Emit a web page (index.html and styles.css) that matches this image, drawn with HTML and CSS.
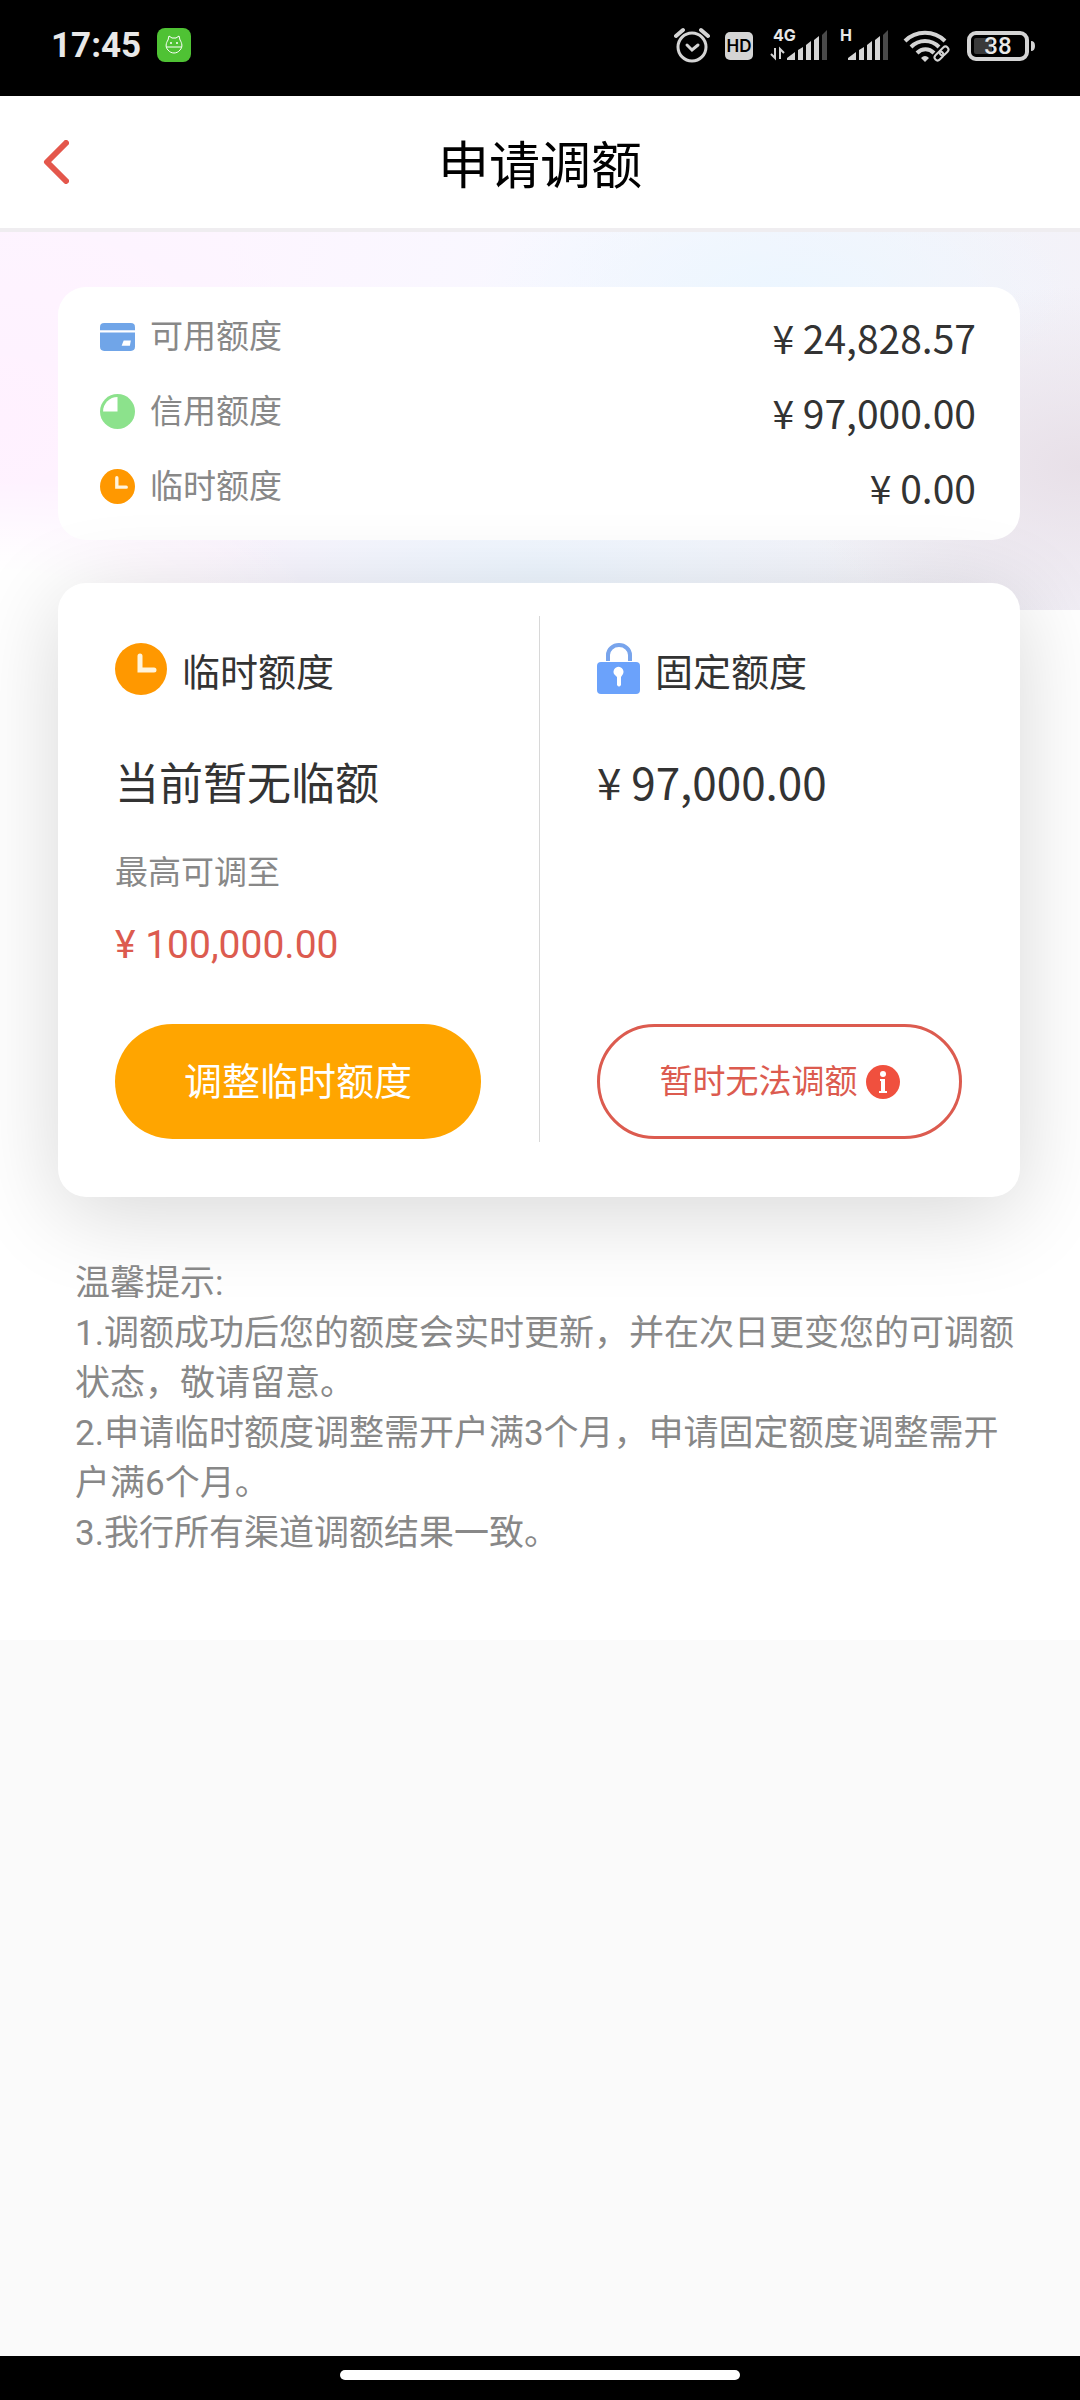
FILE: index.html
```html
<!DOCTYPE html>
<html lang="zh-CN">
<head>
  <meta charset="UTF-8">
  <meta name="viewport" content="width=device-width, initial-scale=1.0">
  <title>申请调额</title>
  <link rel="stylesheet" href="styles.css">
</head>
<body>
  <div class="status-bar">
    <div class="status-left">
      <time class="clock">17:45</time>
      <svg class="app-badge" viewBox="0 0 34 34" aria-hidden="true">
        <rect width="34" height="34" rx="8" fill="#4fc234"/>
        <path d="M11 12l1-4 3 2h4l3-2 1 4c2 3 3 7 0 10-3 4-9 4-12 0-3-3-2-7 0-10zM9 19h16" fill="none" stroke="#fff" stroke-width="1"/>
        <circle cx="14" cy="15" r="1" fill="#fff"/>
        <circle cx="20" cy="15" r="1" fill="#fff"/>
      </svg>
    </div>
    <svg class="status-icons" viewBox="0 0 366 40" aria-label="闹钟 HD 4G 信号 WiFi 电量 38%">
      <!-- alarm -->
      <g fill="none" stroke="#d4d4d4" stroke-width="3" stroke-linecap="round">
        <circle cx="18" cy="22" r="14"/>
        <path d="M13 20l5 5 6-5"/>
        <path d="M2 11l7-6M27 5l7 6" stroke-width="4"/>
      </g>
      <!-- HD -->
      <rect x="51" y="7" width="28" height="28" rx="5" fill="#d4d4d4"/>
      <text x="65" y="27" class="hd-text">HD</text>
      <!-- 4G -->
      <text x="99" y="16" class="net-text">4G</text>
      <path d="M101 23v10l-4-4M106 34V24l4 4" fill="none" stroke="#d4d4d4" stroke-width="2"/>
      <g fill="#d4d4d4">
        <path d="M113 35v-2l8-6v8zM124 35V25l5-3v13zM132 35V20l5-4v19zM140 35V15l5-4v24z"/>
        <path d="M148 35V10l5-5v30z" fill="#4a4a4a"/>
        <path d="M174 35v-2l8-6v8zM185 35V25l5-3v13zM193 35V20l5-4v19zM201 35V15l5-4v24z"/>
        <path d="M209 35V10l5-5v30z" fill="#4a4a4a"/>
      </g>
      <text x="166" y="16" class="net-text">H</text>
      <!-- wifi -->
      <g fill="none" stroke="#d4d4d4" stroke-width="4">
        <path d="M231 16c11-11 29-11 40 0M237 22c8-8 20-8 28 0M243 28c5-5 12-5 17 0"/>
      </g>
      <path d="M247 33q4-4 8 0l-4 4z" fill="#d4d4d4"/>
      <g fill="none" stroke="#000" stroke-width="6">
        <rect x="262" y="27" width="11" height="6" rx="3" transform="rotate(-45 268 30)"/>
      </g>
      <g fill="none" stroke="#d4d4d4" stroke-width="2">
        <rect x="265" y="23" width="10" height="6" rx="3" transform="rotate(-45 270 26)"/>
        <rect x="260" y="28" width="10" height="6" rx="3" transform="rotate(-45 265 31)"/>
      </g>
      <!-- battery -->
      <rect x="295" y="8" width="58" height="26" rx="7" fill="none" stroke="#d4d4d4" stroke-width="4"/>
      <rect x="300" y="13" width="18" height="16" rx="2" fill="#3a3a3a"/>
      <path d="M357 16q4 0 4 5t-4 5z" fill="#d4d4d4"/>
      <text x="324" y="29" class="battery-text">38</text>
    </svg>
  </div>

  <header class="nav-bar">
    <a href="#" class="back" aria-label="返回">
      <svg viewBox="0 0 26 44"><path d="M23 3L4 22l19 19" fill="none" stroke="#e4574c" stroke-width="6" stroke-linecap="round" stroke-linejoin="round"/></svg>
    </a>
    <h1>申请调额</h1>
  </header>

  <main>
    <section class="card summary">
      <dl>
        <div class="row">
          <dt>
            <svg viewBox="0 0 34 34"><rect y="4" width="34" height="27" rx="4" fill="#70a5e8"/><path d="M0 12h34" stroke="#fff" stroke-width="2"/><path d="M23 21h7l-1 5h-8z" fill="#fff"/></svg>
            <span>可用额度</span>
          </dt>
          <dd>¥ 24,828.57</dd>
        </div>
        <div class="row">
          <dt>
            <svg viewBox="0 0 34 34"><circle cx="17" cy="17" r="17" fill="#8ce28c"/><path d="M17 3v14H3A14 14 0 0 1 17 3z" fill="#fff"/></svg>
            <span>信用额度</span>
          </dt>
          <dd>¥ 97,000.00</dd>
        </div>
        <div class="row">
          <dt>
            <svg viewBox="0 0 52 52"><circle cx="26" cy="26" r="26" fill="#ff9800"/><path d="M25 13v14h14" fill="none" stroke="#fff4dc" stroke-width="5" stroke-linecap="round"/></svg>
            <span>临时额度</span>
          </dt>
          <dd>¥ 0.00</dd>
        </div>
      </dl>
    </section>

    <section class="card limits">
      <article class="limit">
        <h2>
          <svg class="icon-clock" viewBox="0 0 52 52"><circle cx="26" cy="26" r="26" fill="#ff9800"/><path d="M25 13v14h14" fill="none" stroke="#fff4dc" stroke-width="5" stroke-linecap="round"/></svg>
          临时额度
        </h2>
        <p class="current">当前暂无临额</p>
        <p class="hint">最高可调至</p>
        <p class="max">¥ 100,000.00</p>
        <button type="button" class="btn btn-primary">调整临时额度</button>
      </article>
      <article class="limit">
        <h2>
          <svg class="icon-lock" viewBox="0 0 43 52"><path d="M11 18v-6a11 10 0 0 1 22 0v6" fill="none" stroke="#78a4ec" stroke-width="4"/><rect y="19" width="43" height="32" rx="4" fill="#6ba2fb"/><path d="M17 31a5 5 0 1 1 9 0l-2 3v8q-2 3-4 0v-8z" fill="#fff"/></svg>
          固定额度
        </h2>
        <p class="current">¥ 97,000.00</p>
        <button type="button" class="btn btn-outline">
          <span>暂时无法调额</span>
          <svg viewBox="0 0 34 34"><circle cx="17" cy="17" r="17" fill="#f0503e"/><circle cx="17" cy="9" r="3" fill="#fff"/><path d="M14 14h5v12h2v2h-8v-2h2V16h-1z" fill="#fff"/></svg>
        </button>
      </article>
    </section>

    <section class="tips">
      <p>温馨提示:</p>
      <p>1.调额成功后您的额度会实时更新，并在次日更变您的可调额状态，敬请留意。</p>
      <p>2.申请临时额度调整需开户满3个月，申请固定额度调整需开户满6个月。</p>
      <p>3.我行所有渠道调额结果一致。</p>
    </section>
  </main>

  <footer class="home-bar"><span></span></footer>
</body>
</html>
```
FILE: styles.css
```css
:root {
  --text-color: #333;
  --muted-color: #888;
  --red: #dc5b4f;
  --orange: #ffa500;
  --page-bg: #fafafa;
  --font-family: Roboto, "Noto Sans CJK SC", sans-serif;
  --font-cjk: "Noto Sans CJK SC", sans-serif;
}

* {
  box-sizing: border-box;
  margin: 0;
  padding: 0;
}

body {
  display: flex;
  flex-direction: column;
  min-height: 100vh;
  font-family: var(--font-family);
  color: var(--text-color);
  background: var(--page-bg);
}

svg {
  flex: none;
}

/* System bar */
.status-bar {
  display: flex;
  justify-content: space-between;
  align-items: center;
  height: 96px;
  padding: 0 40px 6px 51px;
  background: #000;
}

.status-left {
  display: flex;
  align-items: center;
  gap: 16px;
}

.clock {
  font-size: 35px;
  font-weight: 700;
  color: #e8e8e8;
}

.app-badge {
  width: 34px;
  height: 34px;
}

.status-icons {
  width: 366px;
  height: 40px;
}

.hd-text {
  font: 600 17px Inter, sans-serif;
  text-anchor: middle;
}

.net-text {
  font: 700 16px Inter, sans-serif;
  fill: #e8e8e8;
}

.battery-text {
  font: 500 24px Roboto, sans-serif;
  text-anchor: middle;
  fill: #e8e8e8;
}

/* Title bar */
.nav-bar {
  display: grid;
  grid-template-columns: 80px 1fr 80px;
  align-items: center;
  height: 136px;
  background: #fff;
  border-bottom: 4px solid #efedf0;
}

.back {
  display: flex;
  padding-left: 43px;
}

.back svg {
  width: 26px;
  height: 44px;
}

h1 {
  font-size: 51px;
  font-weight: 400;
  color: #000;
  text-align: center;
}

main {
  padding: 55px 60px 81px 58px;
  background-color: #fff;
  background-image:
    radial-gradient(ellipse 320px 130px at 0 100%, #fff 30%, rgba(255, 255, 255, 0)),
    radial-gradient(ellipse 340px 260px at 0 50%, #fff1ff, rgba(255, 241, 255, 0)),
    radial-gradient(ellipse 280px 180px at 100% 62%, #e8e0e8, rgba(232, 224, 232, 0)),
    radial-gradient(ellipse 300px 130px at 72% 16%, #ecf6ff, rgba(236, 246, 255, 0)),
    radial-gradient(ellipse 340px 100px at 50% 90%, #eef6ff, rgba(238, 246, 255, 0)),
    linear-gradient(100deg, #fdf5ff 20%, #f8f8ff 50%, #f4f5fb 75%, #f3f1f8);
  background-size: 100% 378px;
  background-repeat: no-repeat;
}

.card {
  background: #fff;
  border-radius: 28px;
}

/* Summary */
.summary {
  padding: 12px 44px 16px 42px;
}

.row {
  display: flex;
  justify-content: space-between;
  align-items: center;
  height: 75px;
}

.row dt {
  display: flex;
  align-items: center;
  gap: 15px;
  font-size: 33px;
  color: var(--muted-color);
}

.row dt span,
.btn span {
  padding-bottom: 6px;
}

.row dt svg {
  width: 35px;
  height: 35px;
}

.row dd {
  font-family: var(--font-cjk);
  font-size: 39px;
}

/* Limits */
.limits {
  display: grid;
  grid-template-columns: 1fr 1fr;
  margin-top: 43px;
  padding: 33px 0 55px;
  box-shadow: 0 16px 90px rgba(0, 0, 0, 0.16);
}

.limit {
  display: flex;
  flex-direction: column;
  height: 526px;
  padding: 26px 58px 3px 57px;
}

.limit + .limit {
  border-left: 1px solid #d8d8d8;
}

.limit h2 {
  display: flex;
  align-items: center;
  gap: 15px;
  height: 54px;
  font-size: 38px;
  font-weight: 400;
}

.icon-clock {
  width: 52px;
  height: 52px;
}

.icon-lock {
  width: 43px;
  height: 52px;
}

.current {
  margin-top: 52px;
  font-family: var(--font-cjk);
  font-size: 44px;
  line-height: 66px;
}

.hint {
  margin-top: 34px;
  font-size: 33px;
  line-height: 50px;
  color: var(--muted-color);
}

.max {
  margin-top: 20px;
  font-size: 39px;
  line-height: 54px;
  color: var(--red);
}

.btn {
  display: flex;
  justify-content: center;
  align-items: center;
  gap: 8px;
  height: 115px;
  margin-top: auto;
  border: 0;
  border-radius: 60px;
  font-family: inherit;
  cursor: pointer;
}

.btn-primary {
  padding-bottom: 6px;
  font-size: 38px;
  color: #fff;
  background: var(--orange);
}

.btn-outline {
  font-size: 33px;
  color: var(--red);
  background: #fff;
  border: 3px solid var(--red);
}

.btn svg {
  width: 34px;
  height: 34px;
}

/* Tips */
.tips {
  margin: 62px 0 0 17px;
  font-size: 35px;
  line-height: 50px;
  color: var(--muted-color);
}

/* Gesture bar */
.home-bar {
  display: flex;
  justify-content: center;
  height: 44px;
  margin-top: auto;
  padding-top: 14px;
  background: #000;
}

.home-bar span {
  width: 37%;
  height: 10px;
  border-radius: 5px;
  background: #fff;
}
```
